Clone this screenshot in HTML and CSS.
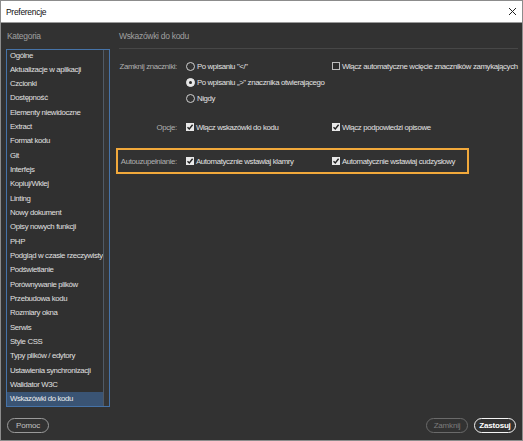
FILE: index.html
```html
<!DOCTYPE html>
<html lang="pl">
<head>
<meta charset="utf-8">
<title>Preferencje</title>
<link rel="stylesheet" href="styles.css">
</head>
<body>
<div class="window">
  <div class="titlebar">
    <span class="title">Preferencje</span>
    <svg class="close" width="9" height="9" viewBox="0 0 9 9"><path d="M1 1 L8 8 M8 1 L1 8" stroke="#222" stroke-width="1" fill="none"/></svg>
  </div>
  <div class="body">
    <div class="main">
      <div class="sidebar">
        <div class="pane-title">Kategoria</div>
        <div class="listbox">
          <ul class="items">
            <li>Ogólne</li>
            <li>Aktualizacje w aplikacji</li>
            <li>Czcionki</li>
            <li>Dostępność</li>
            <li>Elementy niewidoczne</li>
            <li>Extract</li>
            <li>Format kodu</li>
            <li>Git</li>
            <li>Interfejs</li>
            <li>Kopiuj/Wklej</li>
            <li>Linting</li>
            <li>Nowy dokument</li>
            <li>Opisy nowych funkcji</li>
            <li>PHP</li>
            <li>Podgląd w czasie rzeczywisty</li>
            <li>Podświetlanie</li>
            <li>Porównywanie plików</li>
            <li>Przebudowa kodu</li>
            <li>Rozmiary okna</li>
            <li>Serwis</li>
            <li>Style CSS</li>
            <li>Typy plików / edytory</li>
            <li>Ustawienia synchronizacji</li>
            <li>Walidator W3C</li>
            <li class="selected">Wskazówki do kodu</li>
          </ul>
          <div class="scrollbar"></div>
        </div>
      </div>
      <div class="content">
        <div class="pane-title content-title">Wskazówki do kodu</div>
        <div class="settings">
          <div class="group">
            <div class="row">
              <span class="label">Zamknij znaczniki:</span>
              <span class="col1"><span class="radio"></span>Po wpisaniu "&lt;/"</span>
              <span class="col2"><span class="check"></span>Włącz automatyczne wcięcie znaczników zamykających</span>
            </div>
            <div class="row">
              <span class="label"></span>
              <span class="col1 wide"><span class="radio on"></span>Po wpisaniu „&gt;" znacznika otwierającego</span>
            </div>
            <div class="row">
              <span class="label"></span>
              <span class="col1"><span class="radio"></span>Nigdy</span>
            </div>
          </div>
          <div class="row options">
            <span class="label">Opcje:</span>
            <span class="col1"><span class="check on"><svg viewBox="0 0 8 8" width="8" height="8"><path d="M1.5 4.2 L3.3 6 L6.6 1.8" stroke="#222" stroke-width="1.4" fill="none"/></svg></span>Włącz wskazówki do kodu</span>
            <span class="col2"><span class="check on"><svg viewBox="0 0 8 8" width="8" height="8"><path d="M1.5 4.2 L3.3 6 L6.6 1.8" stroke="#222" stroke-width="1.4" fill="none"/></svg></span>Włącz podpowiedzi opisowe</span>
          </div>
          <div class="row highlight">
            <span class="label">Autouzupełnianie:</span>
            <span class="col1"><span class="check on"><svg viewBox="0 0 8 8" width="8" height="8"><path d="M1.5 4.2 L3.3 6 L6.6 1.8" stroke="#222" stroke-width="1.4" fill="none"/></svg></span>Automatycznie wstawiaj klamry</span>
            <span class="col2"><span class="check on"><svg viewBox="0 0 8 8" width="8" height="8"><path d="M1.5 4.2 L3.3 6 L6.6 1.8" stroke="#222" stroke-width="1.4" fill="none"/></svg></span>Automatycznie wstawiaj cudzysłowy</span>
          </div>
        </div>
      </div>
    </div>
    <div class="footer">
      <button class="btn">Pomoc</button>
      <div class="footer-right">
        <button class="btn disabled">Zamknij</button>
        <button class="btn primary">Zastosuj</button>
      </div>
    </div>
  </div>
</div>
</body>
</html>
```
FILE: styles.css
```css
* { box-sizing: border-box; margin: 0; padding: 0; }
html, body { width: 523px; height: 441px; overflow: hidden; }
body {
  font-family: "Liberation Sans", Arial, sans-serif;
  font-size: 7.8px;
  letter-spacing: -0.35px;
  background: #323232;
}
.window {
  width: 523px;
  height: 441px;
  border: 1px solid #8c8c8c;
  display: flex;
  flex-direction: column;
  background: #323232;
}
.titlebar {
  height: 22px;
  flex: none;
  background: #ffffff;
  border-bottom: 1px solid #9a9a9a;
  display: flex;
  align-items: center;
  justify-content: space-between;
  padding: 0 5px 0 5px;
}
.title { color: #111; font-size: 8.5px; letter-spacing: -0.3px; }
.close { display: block; }
.body {
  flex: 1;
  display: flex;
  flex-direction: column;
  padding: 0 6px 7px 5px;
}
.main { display: flex; gap: 6px; flex: 1; }
.sidebar { width: 105px; display: flex; flex-direction: column; }
.pane-title {
  height: 26px;
  line-height: 12px;
  padding-top: 7px;
  padding-left: 1px;
  color: #a0a0a0;
  font-size: 8.5px;
  letter-spacing: -0.3px;
}
.listbox {
  height: 358px;
  border: 1px solid #4673a8;
  display: flex;
  overflow: hidden;
  background: #303030;
}
.items {
  list-style: none;
  flex: 1;
  margin-top: -1.5px;
}
.items li {
  height: 14.33px;
  line-height: 14.33px;
  padding-left: 3px;
  color: #e0e0e0;
  white-space: nowrap;
  overflow: hidden;
}
.items li.selected { background: #3a5474; color: #ececec; }
.scrollbar {
  width: 6px;
  flex: none;
  border-left: 1px solid #505a66;
  background: #363636;
}
.content { flex: 1; display: flex; flex-direction: column; }
.content-title {
  border-bottom: 1px solid #474747;
  margin-left: 3px;
  padding-left: 0;
}
.settings { padding-top: 9px; display: flex; flex-direction: column; }
.row {
  display: flex;
  align-items: center;
  height: 16px;
  white-space: nowrap;
}
.label {
  width: 61px;
  flex: none;
  text-align: right;
  color: #b0b0b0;
  margin-right: 9px;
}
.col1, .col2 {
  display: flex;
  align-items: center;
  color: #e2e2e2;
}
.col1 { width: 146px; flex: none; }
.col1.wide { width: auto; }
.radio {
  width: 9px;
  height: 9px;
  border: 1px solid #cfcfcf;
  border-radius: 50%;
  margin-right: 2px;
  flex: none;
  position: relative;
}
.radio.on { background: #e6e6e6; border-color: #e6e6e6; }
.radio.on::after {
  content: "";
  position: absolute;
  left: 2px; top: 2px;
  width: 3px; height: 3px;
  border-radius: 50%;
  background: #2a2a2a;
}
.check {
  width: 8px;
  height: 8px;
  border: 1px solid #bdbdbd;
  background: #2c2c2c;
  margin-right: 2px;
  flex: none;
  display: flex;
}
.check svg { display: block; margin: -1px; }
.check.on { background: #e8e8e8; border-color: #e8e8e8; }
.options { margin-top: 13px; }
.highlight {
  margin-top: 13px;
  width: 353px;
  height: 26px;
  border: 2px solid #f2a93b;
}
.highlight .label { width: 59px; }
.footer {
  display: flex;
  justify-content: space-between;
  margin-top: 11px;
  height: 15px;
  padding-left: 1px;
}
.footer-right { display: flex; gap: 6px; }
.btn {
  width: 42px;
  height: 15px;
  border-radius: 8px;
  border: 1px solid #9a9a9a;
  background: transparent;
  color: #c0c0c0;
  font-family: "Liberation Sans", Arial, sans-serif;
  font-size: 8px;
  letter-spacing: -0.2px;
}
.btn.disabled { border-color: #6a6a6a; color: #7c7c7c; }
.btn.primary { border: 1.5px solid #f4f4f4; color: #ffffff; font-weight: bold; }
```
